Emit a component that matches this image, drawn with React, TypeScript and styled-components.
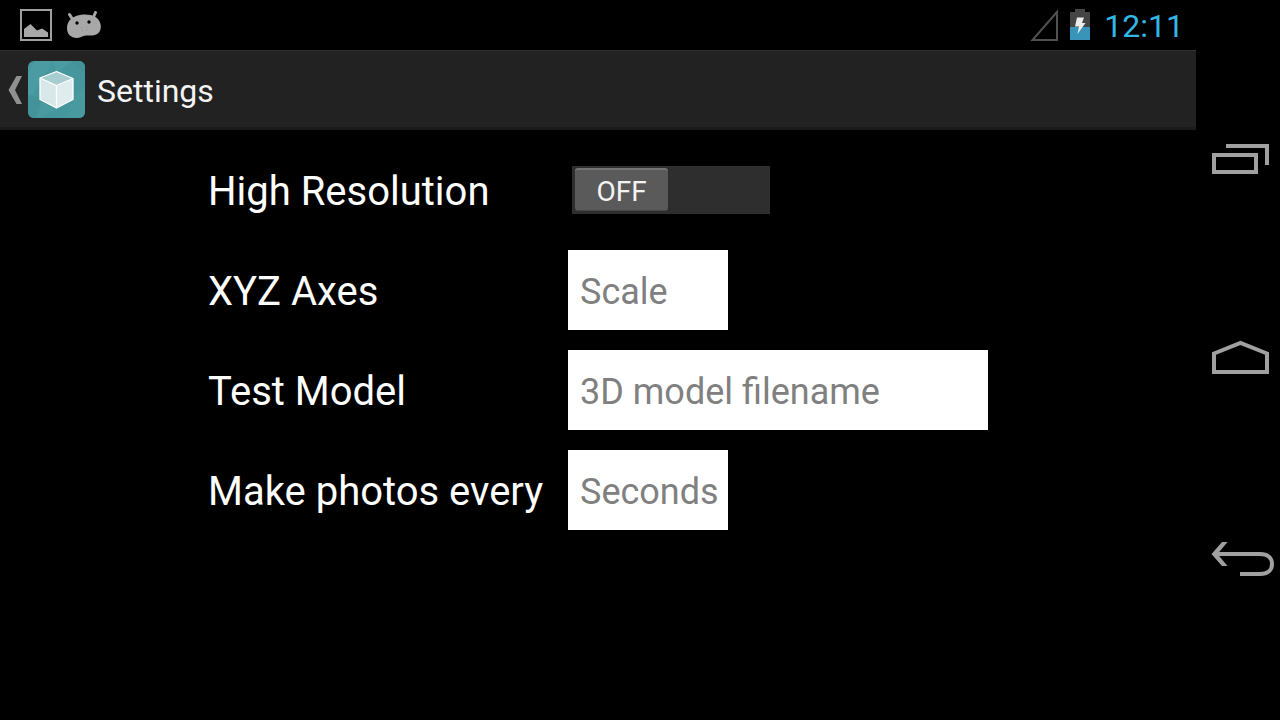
import React, { useState } from "react";
import styled, { createGlobalStyle } from "styled-components";

const GlobalStyle = createGlobalStyle`
  * { box-sizing: border-box; }
  body {
    margin: 0;
    background: #000;
    color: #fff;
    font-family: Roboto, "Noto Sans", sans-serif;
  }
  button, input { font-family: inherit; }
`;

const Screen = styled.div`
  display: flex;
  min-height: 100vh;
  background: #000;
`;

const Content = styled.div`
  flex: 1;
  min-width: 0;
  display: flex;
  flex-direction: column;
`;

const StatusBar = styled.div`
  display: flex;
  align-items: center;
  justify-content: space-between;
  height: 50px;
  padding: 0 12px 0 20px;
`;

const StatusGroup = styled.div<{ $gap: number }>`
  display: flex;
  align-items: center;
  gap: ${(p) => p.$gap}px;
`;

const Clock = styled.time`
  padding: 2px 0 0 2px;
  color: #33b5e5;
  font-size: 32px;
  line-height: 48px;
`;

const ActionBar = styled.header`
  display: flex;
  align-items: center;
  height: 80px;
  background: #222;
  border-top: 1px solid #303030;
  border-bottom: 3px solid #1b1b1b;
`;

const UpButton = styled.button`
  display: flex;
  align-items: center;
  gap: 6px;
  padding: 0 12px 0 8px;
  border: 0;
  background: none;
`;

const Title = styled.h1`
  margin: 0;
  padding-top: 4px;
  color: #f3f3f3;
  font-size: 32px;
  font-weight: 400;
  line-height: 40px;
`;

const Form = styled.form`
  display: grid;
  grid-template-columns: 360px 420px;
  justify-content: center;
  align-items: center;
  grid-auto-rows: 80px;
  row-gap: 20px;
  padding: 20px 0;
`;

const Label = styled.label`
  padding-top: 4px;
  font-size: 40px;
  line-height: 48px;
  white-space: nowrap;
`;

const TextField = styled.input<{ $wide?: boolean }>`
  width: ${(p) => (p.$wide ? "100%" : "160px")};
  height: 80px;
  padding: 4px 8px 0 12px;
  border: 0;
  border-radius: 0;
  outline: 0;
  background: #fff;
  color: #000;
  font-size: 36px;
  &::placeholder { color: #808080; opacity: 1; }
`;

const Track = styled.label<{ $on: boolean }>`
  display: flex;
  justify-content: ${(p) => (p.$on ? "flex-end" : "flex-start")};
  width: 198px;
  height: 48px;
  margin-left: 4px;
  padding: 2px 3px;
  background: #2e2e2e;
  cursor: pointer;
`;

const SwitchInput = styled.input`
  position: absolute;
  width: 1px;
  height: 1px;
  margin: 0;
  opacity: 0;
`;

const Thumb = styled.span<{ $on: boolean }>`
  width: 93px;
  height: 43px;
  border-top: 2px solid #747474;
  border-bottom: 1px solid #484848;
  border-radius: 3px;
  background: ${(p) => (p.$on ? "#33b5e5" : "#5a5a5a")};
  color: #f3f3f3;
  font-size: 28px;
  line-height: 44px;
  text-align: center;
`;

const NavBar = styled.nav`
  display: flex;
  flex-direction: column;
  justify-content: center;
  gap: 120px;
  width: 84px;
`;

const NavButton = styled.button`
  display: block;
  padding: 0;
  border: 0;
  background: none;
`;

const NavIcon = styled.svg`
  display: block;
  fill: none;
  stroke: #a0a0a0;
  stroke-width: 4;
`;

const PictureIcon = () => (
  <svg width="32" height="32" viewBox="0 0 32 32" aria-hidden="true">
    <rect x="1" y="1" width="30" height="30" fill="none" stroke="#a0a0a0" strokeWidth="2" />
    <path d="M4 28V20L10.500 15L17 21.500L22 19.500L28 23.500V28Z" fill="#a8a8a8" />
  </svg>
);

const AndroidIcon = () => (
  <svg width="36" height="28" viewBox="0 0 36 28" aria-hidden="true">
    <path
      d="M3.500 3.500L7 9M29.500 1.500L27 7"
      stroke="#a8a8a8"
      strokeWidth="3"
      strokeLinecap="round"
    />
    <path
      d="M1 17C1 9 8 4 17 3.500C26 3 33 6 34.500 13C36 20 32 25 25 24.500C21 24.300 18 24.500 15 26C9 28.500 1 26 1 17Z"
      fill="#a8a8a8"
    />
    <circle cx="11" cy="12" r="1.700" fill="#000" />
    <circle cx="23" cy="11" r="1.700" fill="#000" />
    <path d="M15 17h1M20 16h1M16 20h1M20 19h1" stroke="#8a8a8a" />
  </svg>
);

const SignalIcon = () => (
  <svg width="28" height="32" viewBox="0 0 28 32" aria-hidden="true">
    <path d="M27 3V31H2.500Z" fill="none" stroke="#505050" strokeWidth="2" />
  </svg>
);

const BatteryIcon = () => (
  <svg width="20" height="32" viewBox="0 0 20 32" aria-hidden="true">
    <path d="M5 0H15V3H20V19H0V3H5Z" fill="#444" />
    <rect y="18" width="20" height="13" fill="#3895b9" />
    <path d="M7 8.500H14L12 14H15.500L7.500 25L9 17.500H5Z" fill="#ececec" />
  </svg>
);

const BackChevron = () => (
  <svg width="14" height="30" viewBox="0 0 14 30" aria-hidden="true">
    <path d="M8.500 2H14L7 16L14 30H8.500L0.500 16Z" fill="#909090" />
  </svg>
);

const AppLogo = () => (
  <svg width="57" height="57" viewBox="0 0 57 57" aria-hidden="true">
    <defs>
      <clipPath id="tile">
        <rect width="57" height="57" rx="6" />
      </clipPath>
    </defs>
    <g clipPath="url(#tile)">
      <rect width="57" height="57" fill="#46979d" />
      <path d="M7 0H25L0 42V14Z" fill="#4b9ca2" />
      <path d="M43 0L57 12V0Z" fill="#429399" />
      <path d="M25 0H43L29 13Z" fill="#4b9ca1" />
      <path d="M0 34L14 36L7 57H0Z" fill="#42949a" />
      <path d="M14 41L29 49L9 57Z" fill="#4a9aa0" />
      <path d="M46 35L57 27V57H38Z" fill="#499a9f" />
    </g>
    <path d="M12 16.500L28.500 10.500L45 17.500L28.500 24.500Z" fill="#a7cdd0" />
    <path d="M12 16.500L28.500 24.500V47L12 38.500Z" fill="#d8e8e9" />
    <path d="M45 17.500L28.500 24.500V47L45 38.500Z" fill="#deeced" />
    <path
      d="M12 17L28.500 10.500L45 17.500V38.500L28.500 47L12 38.500ZL28.500 24.500L45 17.500M28.500 24.500V47"
      fill="none"
      stroke="#fff"
      strokeWidth="1.300"
      strokeLinejoin="round"
    />
  </svg>
);

const navItems = [
  { name: "Recent apps", d: "M18 35H60V52H18ZM30 26H71V45" },
  { name: "Home", d: "M18 33.500L44.500 23L71 33.500V52H18Z" },
  {
    name: "Back",
    d: "M19 34H64C72 34 76 38 76 44S72 54 64 54H44",
    head: "M15.500 34L26 22H31.500L21.500 34L31.500 46H26Z",
  },
];

export default function App() {
  const [highRes, setHighRes] = useState(false);

  return (
    <>
      <GlobalStyle />
      <Screen>
        <Content>
          <StatusBar>
            <StatusGroup $gap={14}>
              <PictureIcon />
              <AndroidIcon />
            </StatusGroup>
            <StatusGroup $gap={12}>
              <SignalIcon />
              <BatteryIcon />
              <Clock>12:11</Clock>
            </StatusGroup>
          </StatusBar>
          <ActionBar>
            <UpButton type="button" aria-label="Navigate up">
              <BackChevron />
              <AppLogo />
            </UpButton>
            <Title>Settings</Title>
          </ActionBar>
          <Form>
            <Label htmlFor="resolution">High Resolution</Label>
            <Track $on={highRes}>
              <SwitchInput
                id="resolution"
                type="checkbox"
                role="switch"
                checked={highRes}
                onChange={(e) => setHighRes(e.target.checked)}
              />
              <Thumb $on={highRes}>{highRes ? "ON" : "OFF"}</Thumb>
            </Track>
            <Label htmlFor="scale">XYZ Axes</Label>
            <TextField id="scale" placeholder="Scale" />
            <Label htmlFor="model">Test Model</Label>
            <TextField id="model" placeholder="3D model filename" $wide />
            <Label htmlFor="interval">Make photos every</Label>
            <TextField id="interval" placeholder="Seconds" />
          </Form>
        </Content>
        <NavBar aria-label="System">
          {navItems.map((item) => (
            <NavButton key={item.name} type="button" aria-label={item.name}>
              <NavIcon width="84" height="80" viewBox="0 0 84 80">
                <path d={item.d} />
                {item.head && <path d={item.head} fill="#a0a0a0" stroke="none" />}
              </NavIcon>
            </NavButton>
          ))}
        </NavBar>
      </Screen>
    </>
  );
}
